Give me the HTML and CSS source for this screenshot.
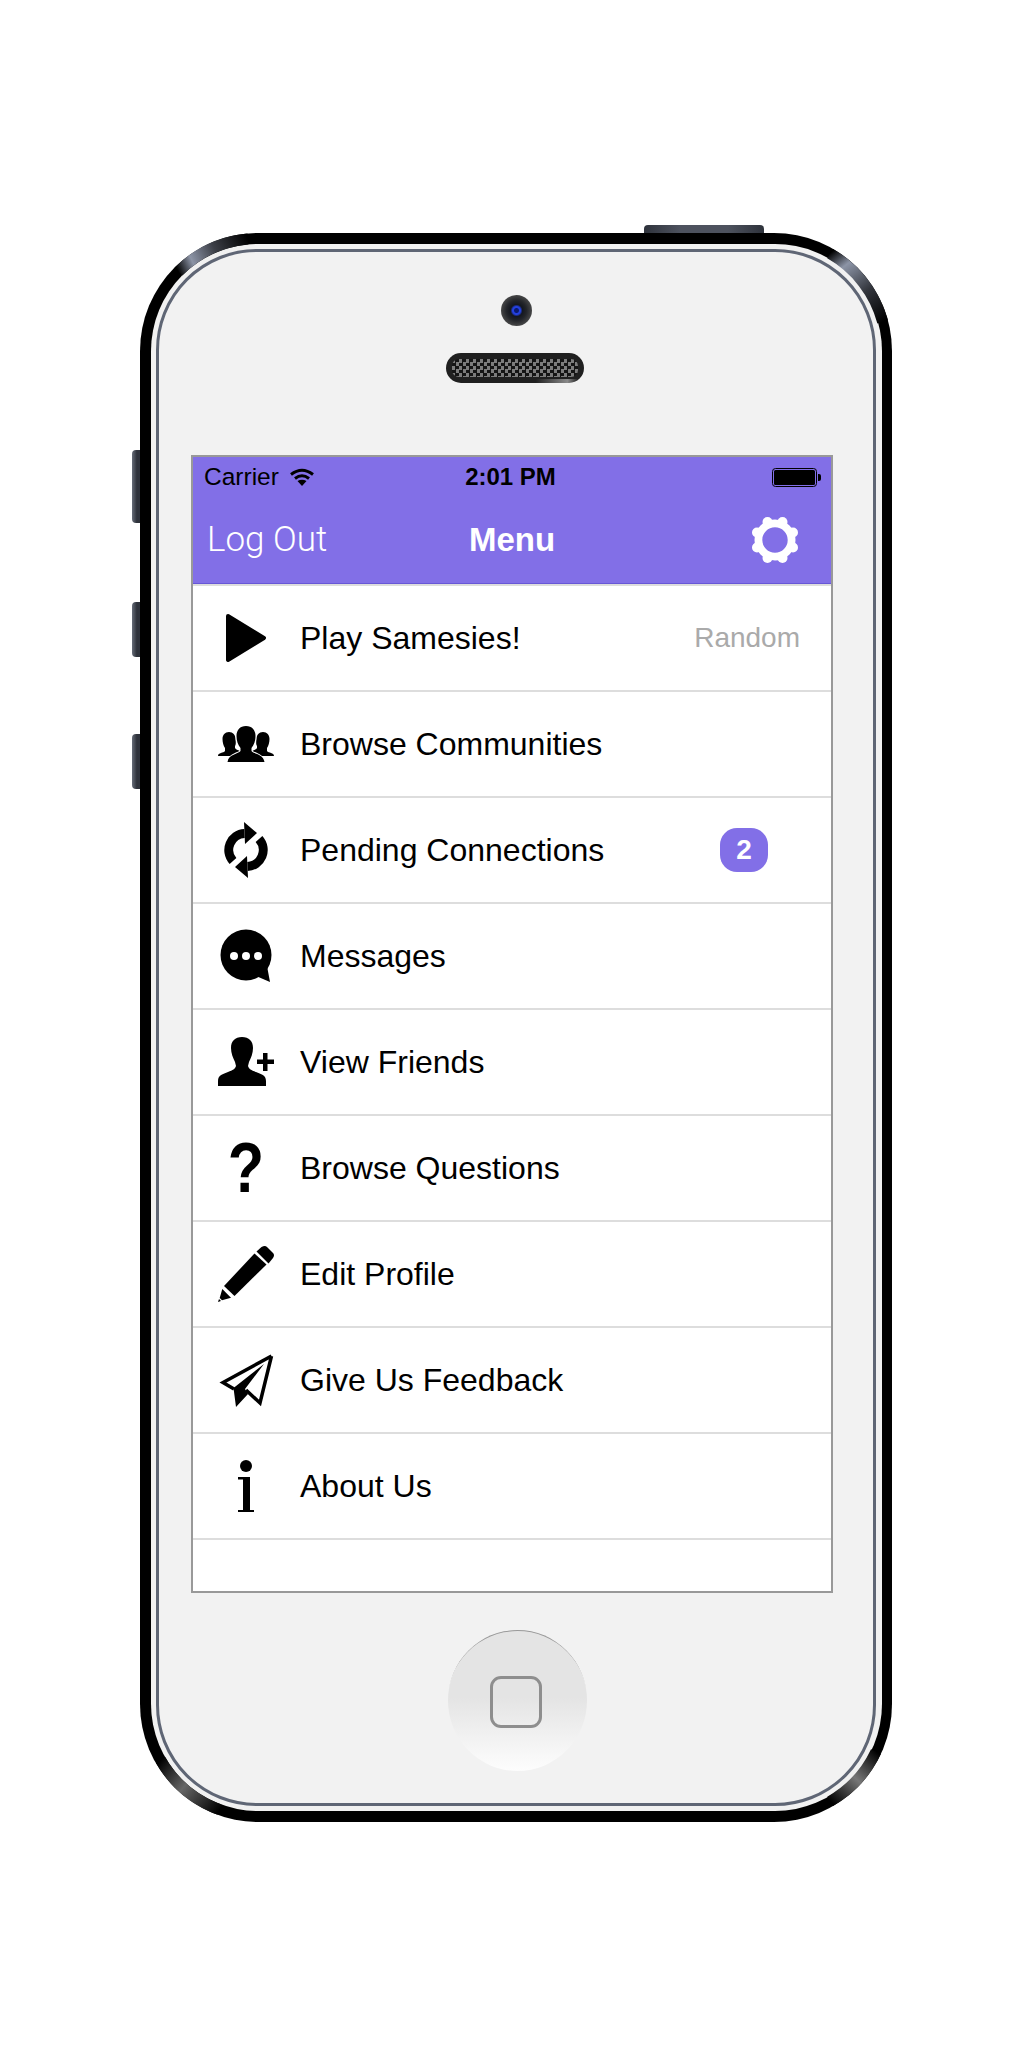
FILE: index.html
```html
<!DOCTYPE html>
<html lang="en">
<head>
    <meta charset="UTF-8">
    <meta name="viewport" content="width=device-width, initial-scale=1.0">
    <title>Menu</title>
    <link rel="stylesheet" href="styles.css">
</head>
<body>
    <div class="phone">
        <div class="side-btn btn-top"></div>
        <div class="side-btn btn-a"></div>
        <div class="side-btn btn-b"></div>
        <div class="side-btn btn-c"></div>

        <div class="bezel">
            <div class="frame">
                <div class="camera"></div>
                <div class="speaker"><div class="mesh"></div></div>

                <div class="screen">
                    <div class="status">
                        <div class="status-left">
                            <span>Carrier</span>
                            <svg class="wifi" width="24" height="18" viewBox="0 0 24 18">
                                <path d="M1 6.500Q12 -2 23 6.500" fill="none" stroke="#000" stroke-width="3"/>
                                <path d="M5 10.500Q12 5 19 10.500" fill="none" stroke="#000" stroke-width="3"/>
                                <path d="M7.500 13Q12 10.500 16.500 13L12 18Z"/>
                            </svg>
                        </div>
                        <span class="clock">2:01 PM</span>
                        <svg class="battery" width="49" height="19" viewBox="0 0 49 19">
                            <rect x="0.500" y="0.500" width="44" height="18" rx="3" fill="none" stroke="#000"/>
                            <rect x="2" y="2" width="41" height="15" rx="1.500"/>
                            <path d="M46 6h1a2 2 0 0 1 2 2v3a2 2 0 0 1-2 2h-1z"/>
                        </svg>
                    </div>
                    <div class="nav">
                        <span class="nav-left">Log Out</span>
                        <span class="nav-title">Menu</span>
                        <svg class="gear" width="50" height="50" viewBox="0 0 50 50" fill="#fff">
                            <circle cx="25" cy="25" r="16.600" fill="none" stroke="#fff" stroke-width="7.800"/>
                            <circle cx="43" cy="17.500" r="5"/><circle cx="43" cy="32.500" r="5"/>
                            <circle cx="7" cy="17.500" r="5"/><circle cx="7" cy="32.500" r="5"/>
                            <circle cx="17.500" cy="7" r="5"/><circle cx="32.500" cy="7" r="5"/>
                            <circle cx="17.500" cy="43" r="5"/><circle cx="32.500" cy="43" r="5"/>
                        </svg>
                    </div>

                    <ul class="menu">
                        <li class="row">
                            <svg class="icon" viewBox="0 0 56 56"><path d="M10 6L46 28L10 50Z" stroke="#000" stroke-width="4" stroke-linejoin="round"/></svg>
                            <span class="row-text">Play Samesies!</span>
                            <span class="row-note">Random</span>
                        </li>
                        <li class="row">
                            <svg class="icon" viewBox="0 0 56 56">
                                <path d="M11 16c-4 0-6.500 3-6.500 7 0 3.500 1 7 2.500 9v3c-1.500 2-7 1.500-7 5h22v-5c-1-1-4-1-5-3v-2c1.500-2 .5-6 .5-7 0-4-2.500-7-6.500-7z"/>
                                <path d="M45 16c4 0 6.500 3 6.500 7 0 3.500-1 7-2.500 9v3c1.500 2 7 1.500 7 5H34v-5c1-1 4-1 5-3v-2c-1.500-2-.5-6-.5-7 0-4 2.500-7 6.500-7z"/>
                                <path d="M28 10c-6 0-9.500 4-9.500 10 0 5 1.500 9 4 12v3c-2 3-12 3-13 11h37c-1-8-11-8-13-11v-3c2.500-3 4-7 4-12 0-6-3.500-10-9.500-10z" stroke="#fff" stroke-width="2" paint-order="stroke"/>
                            </svg>
                            <span class="row-text">Browse Communities</span>
                        </li>
                        <li class="row">
                            <svg class="icon" viewBox="0 0 56 56">
                                <path d="M26.500 11.500A16.500 16.500 0 0 0 15 39M29.500 44.500A16.500 16.500 0 0 0 41 17" fill="none" stroke="#000" stroke-width="9"/>
                                <path d="M26 0L39 11L27 22ZM30 56L17 45L29 34Z"/>
                            </svg>
                            <span class="row-text">Pending Connections</span>
                            <span class="badge">2</span>
                        </li>
                        <li class="row">
                            <svg class="icon" viewBox="0 0 56 56">
                                <circle cx="28" cy="27" r="25.500"/>
                                <path d="M38 48L52 54L49 38Z"/>
                                <circle cx="16" cy="28" r="4" fill="#fff"/><circle cx="28" cy="28" r="4" fill="#fff"/><circle cx="40" cy="28" r="4" fill="#fff"/>
                            </svg>
                            <span class="row-text">Messages</span>
                        </li>
                        <li class="row">
                            <svg class="icon" viewBox="0 0 56 56">
                                <path d="M24 3c-7 0-11 4-11 11 0 5 2 10 4 14l1 4c-1 3-3 4-8 6-5 2-10 3-10 9v5h48v-5c0-6-5-7-10-9-5-2-7-3-8-6l1-4c2-4 4-9 4-14 0-7-4-11-11-11z"/>
                                <path d="M39 25.500h6v-6.500h4.500v6.500H56V30h-6.500v7H45v-7h-6z"/>
                            </svg>
                            <span class="row-text">View Friends</span>
                        </li>
                        <li class="row">
                            <svg class="icon" viewBox="0 0 56 56"><text class="qmark" transform="translate(28 52) scale(.85 1)" text-anchor="middle">?</text></svg>
                            <span class="row-text">Browse Questions</span>
                        </li>
                        <li class="row">
                            <svg class="icon" viewBox="0 0 56 56">
                                <path d="M38.500 5.500L43.500 1Q47-1 49 1L55 7Q57 9 55 12L50.500 17.500Z"/>
                                <path d="M36.500 7.500L48.500 18.500L16.500 50L6 40Z"/>
                                <path d="M4.300 43L13 51.700L4 54.200L1.700 52Z"/>
                                <path d="M0 56L1 53L3 55Z"/>
                            </svg>
                            <span class="row-text">Edit Profile</span>
                        </li>
                        <li class="row">
                            <svg class="icon" viewBox="0 0 56 56">
                                <path d="M53.500 4L5 30.500L16 37M53.500 4L42 51L28 38" fill="none" stroke="#000" stroke-width="3.500"/>
                                <path d="M15.500 36L18 55L30 42L27 37L46 12Z"/>
                            </svg>
                            <span class="row-text">Give Us Feedback</span>
                        </li>
                        <li class="row">
                            <svg class="icon" viewBox="0 0 56 56">
                                <circle cx="28" cy="8" r="6"/>
                                <path d="M20 19H32V52H36V54H20V52H25V21.500H20Z"/>
                            </svg>
                            <span class="row-text">About Us</span>
                        </li>
                    </ul>
                </div>

                <div class="home"><div class="home-square"></div></div>
            </div>
        </div>

        <!-- shine on the metal corners -->
        <svg class="shine" width="752" height="1589" viewBox="0 0 752 1589" fill="none" stroke-width="11">
            <defs>
                <linearGradient id="shineTL" gradientUnits="userSpaceOnUse" x1="38" y1="38" x2="108" y2="6">
                    <stop offset="0" stop-color="#000"/><stop offset=".22" stop-color="#8c94a6"/><stop offset=".55" stop-color="#3c3f47"/><stop offset="1" stop-color="#000"/>
                </linearGradient>
                <linearGradient id="shineTR" gradientUnits="userSpaceOnUse" x1="690" y1="20" x2="743" y2="89">
                    <stop offset="0" stop-color="#000"/><stop offset=".22" stop-color="#8c94a6"/><stop offset=".6" stop-color="#33363d"/><stop offset="1" stop-color="#000"/>
                </linearGradient>
                <linearGradient id="shineBL" gradientUnits="userSpaceOnUse" x1="21" y1="1527" x2="80" y2="1577">
                    <stop offset="0" stop-color="#000"/><stop offset=".45" stop-color="#666"/><stop offset="1" stop-color="#000"/>
                </linearGradient>
                <linearGradient id="shineBR" gradientUnits="userSpaceOnUse" x1="736" y1="1518" x2="690" y2="1568">
                    <stop offset="0" stop-color="#000"/><stop offset=".5" stop-color="#777"/><stop offset="1" stop-color="#000"/>
                </linearGradient>
            </defs>
            <path d="M38.500 38.500A112.500 112.500 0 0 1 108 6" stroke="url(#shineTL)"/>
            <path d="M690 20.600A112.500 112.500 0 0 1 742.700 89" stroke="url(#shineTR)"/>
            <path d="M20.600 1527A112.500 112.500 0 0 0 79.500 1576.700" stroke="url(#shineBL)"/>
            <path d="M736 1518.500A112.500 112.500 0 0 1 690 1568.400" stroke="url(#shineBR)"/>
        </svg>
    </div>
</body>
</html>
```

FILE: styles.css
```css
* {
    box-sizing: border-box;
}
body {
    margin: 0;
    background: #fff;
    font-family: 'Liberation Sans', Arial, sans-serif;
    color: #000;
}
.phone {
    position: relative;
    width: 752px;
    height: 1589px;
    margin: 233px 0 0 140px;
    padding: 11px 10px 11px 11px;
    background: #000;
    border-radius: 118px;
}
.side-btn {
    position: absolute;
    left: -8px;
    width: 8px;
    border-radius: 4px 0 0 4px;
    background: linear-gradient(90deg, #666c78, #2e323b 60%);
}
.btn-top {
    left: 504px;
    top: -8px;
    width: 120px;
    height: 8px;
    border-radius: 4px 4px 0 0;
    background: linear-gradient(90deg, #2e323b, #4d525e 30%, #4d525e 70%, #2e323b);
}
.btn-a { top: 217px; height: 73px; }
.btn-b { top: 369px; height: 55px; }
.btn-c { top: 501px; height: 55px; }
.bezel {
    height: 100%;
    padding: 5px 6px 5px 5px;
    background: #f1f1f1;
    border-radius: 107px;
}
.frame {
    display: flex;
    flex-direction: column;
    align-items: center;
    height: 100%;
    padding-top: 43px;
    background: #f2f2f2;
    border: 3px solid #5f6675;
    border-radius: 101px;
}
.camera {
    width: 31px;
    height: 31px;
    border-radius: 50%;
    background: radial-gradient(circle, #0b1a70 0 2px, #2340e0 3px 4px, #14171f 6px, #23252a 10px, #4a4a4a 16px);
}
.speaker {
    width: 138px;
    height: 30px;
    margin: 27px 0 0 -2px;
    padding: 6px 6px;
    border-radius: 15px;
    background: linear-gradient(90deg, transparent 65%, #8a8a8a 88%, transparent 96%) bottom / 100% 4px no-repeat, #202020;
}
.mesh {
    height: 18px;
    border-radius: 7px;
    background: repeating-conic-gradient(#151515 0 25%, #7c7c7c 0 50%) 0 0 / 7px 7px;
}
.screen {
    display: flex;
    flex-direction: column;
    align-self: flex-start;
    width: 642px;
    height: 1138px;
    margin: 72px 0 0 32px;
    background: #fff;
    border: 2px solid #999;
}
.status {
    display: grid;
    grid-template-columns: 1fr auto 1fr;
    align-items: center;
    height: 40px;
    padding: 0 10px 0 11px;
    background: #826fe7;
    font-size: 24.5px;
}
.status-left {
    display: flex;
    align-items: center;
    gap: 11px;
}
.clock {
    font-size: 24px;
    font-weight: bold;
    margin-left: -4px;
}
.battery {
    justify-self: end;
}
.nav {
    display: grid;
    grid-template-columns: 1fr auto 1fr;
    align-items: center;
    height: 87px;
    padding-bottom: 1px;
    background: #826fe7;
    border-bottom: 1px solid #6757d6;
    color: #fff;
}
.nav-left {
    margin-left: 14px;
    font-family: Roboto, sans-serif;
    font-weight: 300;
    font-size: 35px;
}
.nav-title {
    font-weight: bold;
    font-size: 33px;
}
.gear {
    justify-self: end;
    margin-right: 31px;
}
.menu {
    flex: 1;
    margin: 0;
    padding: 0;
    list-style: none;
    border-top: 2px solid #ddd;
}
.row {
    display: flex;
    align-items: center;
    height: 106px;
    padding: 0 31px 0 25px;
    border-bottom: 2px solid #ddd;
    font-size: 32px;
}
.icon {
    flex: none;
    width: 56px;
    height: 56px;
    margin-right: 26px;
    overflow: visible;
}
.row-text {
    padding-top: 1px;
}
.qmark {
    font-family: 'Liberation Sans', Arial, sans-serif;
    font-weight: bold;
    font-size: 70px;
}
.row-note {
    margin-left: auto;
    font-size: 28px;
    color: #aaa;
}
.badge {
    display: flex;
    align-items: center;
    justify-content: center;
    width: 48px;
    height: 44px;
    margin: 0 32px 0 auto;
    border-radius: 17px;
    background: #826fe7;
    color: #fff;
    font-size: 28px;
    font-weight: bold;
}
.home {
    display: flex;
    align-items: center;
    justify-content: center;
    width: 139px;
    height: 141px;
    margin: 37px 0 0 2px;
    border-radius: 50%;
    background: linear-gradient(#e4e4e4 48%, #fdfdfd 100%);
    box-shadow: inset 0 2px 0 -1px #999;
}
.home-square {
    width: 52px;
    height: 52px;
    margin: 3px 0 0 -2px;
    border: 3px solid #8e8e8e;
    border-radius: 11px;
}
.shine {
    position: absolute;
    left: 0;
    top: 0;
}
```
